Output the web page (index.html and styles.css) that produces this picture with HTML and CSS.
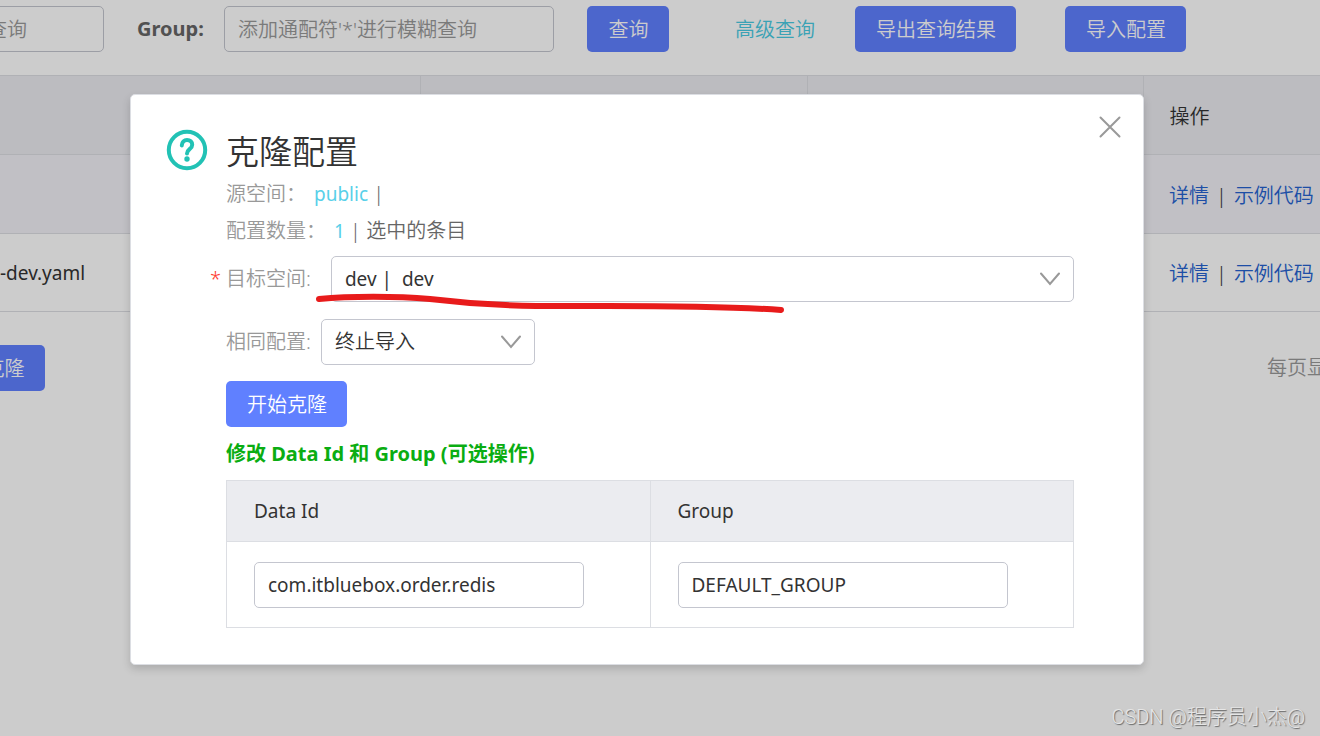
FILE: index.html
```html
<!DOCTYPE html>
<html lang="zh-CN">
<head>
<meta charset="utf-8">
<title>克隆配置</title>
<link rel="stylesheet" href="styles.css">
</head>
<body>
<main class="page">
  <form class="toolbar">
    <input class="input search" type="text" aria-label="Data Id" placeholder="添加通配符'*'进行模糊查询">
    <label class="group-label" for="group">Group:</label>
    <input class="input search" id="group" type="text" placeholder="添加通配符'*'进行模糊查询">
    <button class="btn query" type="button">查询</button>
    <a class="advanced" href="#">高级查询</a>
    <button class="btn export" type="button">导出查询结果</button>
    <button class="btn import" type="button">导入配置</button>
  </form>
  <table class="list">
    <colgroup><col class="col-id"><col class="col-group"><col class="col-app"><col></colgroup>
    <thead><tr><th></th><th></th><th></th><th class="ops">操作</th></tr></thead>
    <tbody>
      <tr class="hover"><td></td><td></td><td></td><td class="ops"><a href="#">详情</a><span class="bar">|</span><a href="#">示例代码</a></td></tr>
      <tr><td class="latin">-dev.yaml</td><td></td><td></td><td class="ops"><a href="#">详情</a><span class="bar">|</span><a href="#">示例代码</a></td></tr>
    </tbody>
  </table>
  <div class="footer">
    <button class="btn clone" type="button">克隆</button>
    <span class="page-size">每页显示</span>
  </div>
</main>

<div class="overlay">
  <section class="dialog" role="dialog" aria-labelledby="dialog-title">
    <svg class="help" viewBox="0 0 42 42" aria-hidden="true">
      <circle cx="21" cy="21" r="18.2" fill="none" stroke="#22c2b5" stroke-width="4"/>
      <path d="M15.8 16.4C16 12.9 18.2 11 21 11c3.1 0 5.2 2 5.2 4.700 0 4.700-5.200 4.200-5.200 8.800" fill="none" stroke="#22c2b5" stroke-width="4" stroke-linecap="round"/>
      <circle cx="21" cy="30" r="2.700" fill="#22c2b5"/>
    </svg>
    <div class="content">
      <h1 id="dialog-title">克隆配置</h1>
      <p class="info"><span class="label">源空间：</span><span class="value latin">public</span> |</p>
      <p class="info"><span class="label">配置数量：</span><span class="value latin">1</span> | 选中的条目</p>
      <div class="field target">
        <label class="label required" for="target">目标空间:</label>
        <div class="select">
          <select class="latin" id="target"><option>dev |&nbsp; dev</option></select>
          <svg class="chevron" viewBox="0 0 20 14" aria-hidden="true"><path d="M1 1.500l9 10.500 9-10.500"/></svg>
        </div>
        <svg class="mark" viewBox="0 0 470 20" aria-hidden="true"><path d="M3 6C34 3 80 3 114 6C147 10 177 12.500 220 13S380 11 465 17"/></svg>
      </div>
      <div class="field">
        <label class="label" for="policy">相同配置:</label>
        <div class="select policy">
          <select id="policy"><option>终止导入</option></select>
          <svg class="chevron" viewBox="0 0 20 14" aria-hidden="true"><path d="M1 1.500l9 10.500 9-10.500"/></svg>
        </div>
      </div>
      <button class="btn start" type="button">开始克隆</button>
      <h2>修改 Data Id 和 Group (可选操作)</h2>
      <table class="edit">
        <thead><tr><th class="latin">Data Id</th><th class="latin">Group</th></tr></thead>
        <tbody><tr>
          <td><input class="input latin" type="text" aria-label="Data Id" value="com.itbluebox.order.redis"></td>
          <td><input class="input latin" type="text" aria-label="Group" value="DEFAULT_GROUP"></td>
        </tr></tbody>
      </table>
    </div>
    <button class="close" type="button" aria-label="关闭"><svg viewBox="0 0 22 22" aria-hidden="true"><path d="M1.500 1.500l19 19M20.500 1.500l-19 19"/></svg></button>
  </section>
</div>
<div class="watermark">CSDN @程序员小杰@</div>
</body>
</html>
```
FILE: styles.css
```css
* { box-sizing: border-box; }
body {
  margin: 0;
  min-height: 100vh;
  position: relative;
  overflow: hidden;
  background: #fff;
  color: #333;
  font: 350 20px/30px "Noto Sans", "Noto Sans CJK SC", sans-serif;
}
input, select, button { font: inherit; color: inherit; }
a { color: #2562d0; text-decoration: none; }
table { border-collapse: collapse; table-layout: fixed; width: 100%; }
th, td { text-align: left; font-weight: inherit; padding: 0; }
.latin { font-size: 19px; font-weight: 400; }

.input {
  width: 330px;
  height: 46px;
  padding: 0 13px;
  border: 1px solid #c4c6cf;
  border-radius: 5px;
  background: #fff;
}
.input::placeholder { color: #999; opacity: 1; }
.btn {
  flex: none;
  min-width: 82px;
  height: 46px;
  padding: 2px 20px 0 21px;
  border: 0;
  border-radius: 5px;
  background: #6080ff;
  color: #fff;
  white-space: nowrap;
}

.toolbar {
  display: flex;
  align-items: center;
  margin-left: -226px;
  padding: 6px 0 23px;
}
.search { flex: none; }
.group-label { flex: none; width: 120px; padding-left: 33px; font-weight: 700; color: #666; }
.query { margin-left: 33px; }
.advanced { flex: none; margin: 2px 40px 0 66px; color: #49cbe3; }
.import { margin-left: 49px; }

.list th, .list td { height: 79px; border-top: 1px solid #dcdee3; border-bottom: 1px solid #dcdee3; }
.list tr:last-child td { height: 78px; }
.list th { background: #ebecf0; border-right: 1px solid #dcdee3; }
.list th:last-child { border-right: 0; }
.hover { background: #f2f1f7; }
.col-id { width: 420px; }
.col-group { width: 387px; }
.col-app { width: 336px; }
.list .ops { padding: 3px 0 0 26px; white-space: nowrap; }
.bar { padding: 0 7px; }
.footer { display: flex; justify-content: space-between; align-items: center; padding-top: 33px; }
.clone { margin-left: -37px; }
.page-size { width: 53px; overflow: hidden; white-space: nowrap; color: #999; }

.overlay {
  position: absolute;
  inset: 0;
  padding: 94px 176px 0 130px;
  background: rgba(0, 0, 0, .2);
}
.dialog {
  position: relative;
  display: flex;
  gap: 18px;
  padding: 34px 69px 36px 35px;
  border: 1px solid #dcdee3;
  border-radius: 5px;
  background: #fff;
  box-shadow: 0 4px 8px rgba(0, 0, 0, .16);
}
.help { flex: none; width: 42px; height: 42px; }
.content { flex: 1; min-width: 0; }
h1 { margin: 0; font-size: 33px; line-height: 46px; font-weight: 350; }
.info { margin: 0; line-height: 37px; color: #666; }
.info .latin { line-height: 30px; }
.label { color: #999; }
.value { margin-left: 8px; color: #58d0e9; }
.field { display: flex; align-items: center; gap: 10px; margin-bottom: 16px; }
.field .label { flex: none; }
.target { position: relative; gap: 20px; margin-top: 7px; margin-bottom: 17px; }
.required::before { content: "*"; color: #ff3b30; margin-left: -16px; padding-right: 5px; }
.select { flex: 1; position: relative; }
.policy { flex: none; width: 214px; }
.select select {
  display: block;
  width: 100%;
  height: 46px;
  padding: 0 48px 0 13px;
  border: 1px solid #c4c6cf;
  border-radius: 5px;
  background: #fff;
  appearance: none;
}
.chevron { position: absolute; right: 14px; top: 16px; width: 20px; height: 14px; }
.chevron path, .close path { fill: none; stroke: #999; stroke-width: 2; stroke-linecap: round; }
.mark { position: absolute; left: 90px; top: 37px; width: 470px; height: 20px; }
.mark path { fill: none; stroke: #e81b1b; stroke-width: 6; stroke-linecap: round; }
h2 { margin: 12px 0 11px; font-size: 20px; line-height: 30px; font-weight: 700; color: #0aad12; }
.start { display: block; }
.edit th, .edit td { padding: 0 27px; border: 1px solid #dcdee3; }
.edit th { height: 61px; background: #ebecf0; }
.edit td { height: 86px; }
.close {
  position: absolute;
  right: 22px;
  top: 21px;
  width: 22px;
  height: 22px;
  padding: 0;
  border: 0;
  background: none;
}
.close svg { display: block; }
.watermark {
  position: absolute;
  right: 15px;
  bottom: 5px;
  font: 300 20px/28px Roboto, "Noto Sans CJK SC", sans-serif;
  color: #e6e6e6;
  text-shadow: 1px 1px 1px #666;
}
```
